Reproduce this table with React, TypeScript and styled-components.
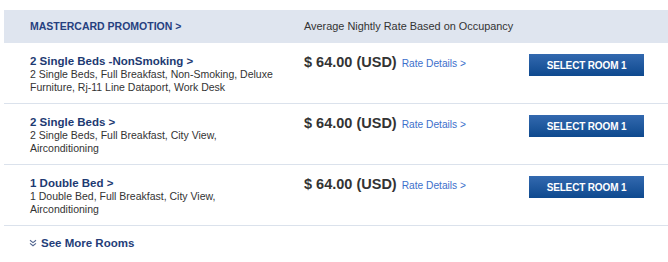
import React from "react";
import styled, { createGlobalStyle } from "styled-components";

const Global = createGlobalStyle`
  html, body { margin: 0; padding: 0; background: #fff; }
  body { font-family: "Liberation Sans", Arial, sans-serif; }
`;

const Wrap = styled.div`
  padding: 10px 0 0 4px;
  width: 664px;
`;

const Grid = styled.div`
  display: grid;
  grid-template-columns: 300px 225px 115px 1fr;
`;

const Header = styled(Grid)`
  height: 33px;
  background: #dfe5ef;
  align-items: center;
`;

const Promo = styled.a`
  padding-left: 26px;
  font-size: 10.5px;
  font-weight: bold;
  color: #26407f;
  text-decoration: none;
  line-height: 13px;
`;

const HeadNote = styled.div`
  grid-column: 2 / 4;
  font-size: 10.9px;
  color: #333;
  line-height: 13px;
`;

const Row = styled(Grid)`
  border-bottom: 1px solid #dbe2ec;
  align-items: start;
  padding-top: 12px;
  box-sizing: content-box;
  height: 48px;
`;

const RoomInfo = styled.div`
  padding-left: 26px;
  width: 250px;
`;

const RoomTitle = styled.a`
  display: block;
  font-size: 11.5px;
  font-weight: bold;
  color: #1d3a72;
  line-height: 13px;
  text-decoration: none;
`;

const RoomDesc = styled.div`
  font-size: 10.5px;
  color: #333;
  line-height: 13px;
`;

const PriceCell = styled.div`
  display: flex;
  align-items: baseline;
  gap: 5px;
  margin-top: -1px;
`;

const Price = styled.span`
  font-size: 14.5px;
  font-weight: bold;
  color: #333;
  line-height: 17px;
`;

const RateLink = styled.a`
  font-size: 10.2px;
  color: #3d6fcb;
  text-decoration: none;
`;

const SelectButton = styled.button`
  width: 115px;
  height: 22px;
  border: 0;
  padding: 0;
  margin-top: -1px;
  background: linear-gradient(#3369af, #0e498e);
  color: #fff;
  font-family: "Liberation Sans", Arial, sans-serif;
  font-size: 10px;
  font-weight: bold;
  letter-spacing: -0.15px;
  cursor: pointer;
`;

const More = styled.a`
  display: flex;
  align-items: center;
  gap: 4px;
  padding: 10px 0 0 25px;
  font-size: 11.5px;
  font-weight: bold;
  color: #243d78;
  text-decoration: none;
  line-height: 14px;
`;

const rooms = [
  {
    title: "2 Single Beds -NonSmoking >",
    desc: "2 Single Beds, Full Breakfast, Non-Smoking, Deluxe Furniture, Rj-11 Line Dataport, Work Desk",
  },
  {
    title: "2 Single Beds >",
    desc: "2 Single Beds, Full Breakfast, City View, Airconditioning",
  },
  {
    title: "1 Double Bed >",
    desc: "1 Double Bed, Full Breakfast, City View, Airconditioning",
  },
];

const Chevrons = () => (
  <svg width="8" height="8" viewBox="0 0 8 8" fill="none" stroke="#50648f" strokeWidth="1.1">
    <path d="M1 1.2 L4 3.6 L7 1.2" />
    <path d="M1 4.4 L4 6.8 L7 4.4" />
  </svg>
);

export default function App() {
  return (
    <Wrap>
      <Global />
      <Header>
        <Promo href="#">MASTERCARD PROMOTION &gt;</Promo>
        <HeadNote>Average Nightly Rate Based on Occupancy</HeadNote>
      </Header>
      {rooms.map((r, i) => (
        <Row key={i}>
          <RoomInfo>
            <RoomTitle href="#">{r.title}</RoomTitle>
            <RoomDesc>{r.desc}</RoomDesc>
          </RoomInfo>
          <PriceCell>
            <Price>$ 64.00 (USD)</Price>
            <RateLink href="#">Rate Details &gt;</RateLink>
          </PriceCell>
          <SelectButton>SELECT ROOM 1</SelectButton>
        </Row>
      ))}
      <More href="#">
        <Chevrons />
        See More Rooms
      </More>
    </Wrap>
  );
}
